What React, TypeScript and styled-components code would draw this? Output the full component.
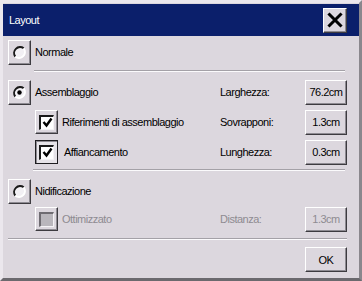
import styled, { createGlobalStyle } from 'styled-components';

const GlobalStyle = createGlobalStyle`
  html, body {
    margin: 0;
    padding: 0;
    background: #dcd7de;
  }
  * {
    box-sizing: border-box;
  }
`;

const FONT = `"Liberation Sans Narrow", "Arial Narrow", "Liberation Sans", Arial, sans-serif`;

export default function App() {
  return (
    <>
      <GlobalStyle />
      <Window>
        <TitleBar>
          <Title>Layout</Title>
          <CloseButton aria-label="Chiudi">
            <svg width="16" height="16" viewBox="0 0 16 16">
              <path d="M2.5 2.5 L13.5 13.5 M13.5 2.5 L2.5 13.5" stroke="#000" strokeWidth="3" strokeLinecap="square" />
            </svg>
          </CloseButton>
        </TitleBar>

        <Body>
          <OptionLine>
            <Radio />
            <OptionLabel>Normale</OptionLabel>
          </OptionLine>

          <Divider $left={26} $top={5} />

          <Section $top={7}>
            <OptionLine>
              <Radio checked />
              <OptionLabel>Assemblaggio</OptionLabel>
            </OptionLine>
            <FieldLabel>Larghezza:</FieldLabel>
            <ValueButton>76.2cm</ValueButton>

            <SubOption>
              <Checkbox checked />
              <OptionLabel>Riferimenti di assemblaggio</OptionLabel>
            </SubOption>
            <FieldLabel>Sovrapponi:</FieldLabel>
            <ValueButton>1.3cm</ValueButton>

            <SubOption>
              <Checkbox checked pressed />
              <OptionLabel $shift={2}>Affiancamento</OptionLabel>
            </SubOption>
            <FieldLabel>Lunghezza:</FieldLabel>
            <ValueButton>0.3cm</ValueButton>
          </Section>

          <Divider $left={25} $top={4} />

          <Section $top={7} $gap={2}>
            <OptionLine>
              <Radio />
              <OptionLabel>Nidificazione</OptionLabel>
            </OptionLine>
            <span />
            <span />

            <SubOption>
              <Checkbox disabled />
              <OptionLabel $disabled>Ottimizzato</OptionLabel>
            </SubOption>
            <FieldLabel $disabled>Distanza:</FieldLabel>
            <ValueButton $disabled>1.3cm</ValueButton>
          </Section>

          <Divider $left={0} $top={6} $right={0} />

          <Footer>
            <ValueButton>OK</ValueButton>
          </Footer>
        </Body>
      </Window>
    </>
  );
}

function Radio({ checked = false }: { checked?: boolean }) {
  return (
    <RadioFrame>
      <svg width="15" height="15" viewBox="0 0 15 15">
        <circle cx="7.5" cy="7.5" r="6" fill="#f2f0f4" />
        <path d="M11.7 3.3 A6 6 0 0 0 3.3 11.7" fill="none" stroke="#1a1a1a" strokeWidth="2" />
        <path d="M3.3 11.7 A6 6 0 0 0 11.7 3.3" fill="none" stroke="#ffffff" strokeWidth="2" />
        {checked && <circle cx="7.5" cy="7.5" r="2.2" fill="#000" />}
      </svg>
    </RadioFrame>
  );
}

function Checkbox({
  checked = false,
  pressed = false,
  disabled = false,
}: {
  checked?: boolean;
  pressed?: boolean;
  disabled?: boolean;
}) {
  return (
    <CheckFrame $pressed={pressed}>
      <CheckBox $disabled={disabled}>
        {checked && (
          <svg width="11" height="11" viewBox="0 0 11 11">
            <path d="M1.5 5 L4.5 8.5 L9.5 1.5" fill="none" stroke="#000" strokeWidth="2.4" />
          </svg>
        )}
      </CheckBox>
    </CheckFrame>
  );
}

// styled-components

const Window = styled.div`
  width: 362px;
  height: 281px;
  padding-top: 1px;
  background: #dcd7de;
  border-top: 3px solid #ebe7ed;
  border-left: 3px solid #ebe7ed;
  border-right: 3px solid #8a878d;
  border-bottom: 3px solid #6b696e;
  font-family: ${FONT};
  font-size: 11px;
  letter-spacing: -0.5px;
  color: #000;
  overflow: hidden;
`;

const TitleBar = styled.div`
  height: 32px;
  display: flex;
  align-items: center;
  justify-content: space-between;
  padding: 0 12px 0 6px;
  background: #0b1f6b;
`;

const Title = styled.span`
  color: #fff;
  font-size: 11px;
`;

const CloseButton = styled.div`
  width: 24px;
  height: 25px;
  display: flex;
  align-items: center;
  justify-content: center;
  background: #dcd7de;
  border-top: 1px solid #fff;
  border-left: 1px solid #fff;
  border-right: 1px solid #3d3b40;
  border-bottom: 1px solid #3d3b40;
  box-shadow: inset -1px -1px #8e8b92;
`;

const Body = styled.div`
  display: flex;
  flex-direction: column;
  padding: 3px 12px 0 5px;
`;

const OptionLine = styled.div`
  display: flex;
  align-items: center;
  gap: 4px;
  height: 26px;
`;

const SubOption = styled(OptionLine)`
  padding-left: 27px;
`;

const OptionLabel = styled.span<{ $disabled?: boolean; $shift?: number }>`
  color: ${(p) => (p.$disabled ? '#8e8b91' : '#000')};
  margin-left: ${(p) => p.$shift ?? 0}px;
  white-space: nowrap;
`;

const FieldLabel = styled.span<{ $disabled?: boolean }>`
  color: ${(p) => (p.$disabled ? '#8e8b91' : '#000')};
  white-space: nowrap;
`;

const Section = styled.div<{ $top: number; $gap?: number }>`
  display: grid;
  grid-template-columns: 1fr 85px 42px;
  grid-auto-rows: 26px;
  row-gap: ${(p) => p.$gap ?? 4}px;
  align-items: center;
  margin-top: ${(p) => p.$top}px;
`;

const Divider = styled.div<{ $left: number; $top: number; $right?: number }>`
  height: 2px;
  margin: ${(p) => p.$top}px ${(p) => p.$right ?? 2}px 0 ${(p) => p.$left}px;
  border-top: 1px solid #a4a1a7;
  border-bottom: 1px solid #fbfafc;
`;

const RadioFrame = styled.div`
  width: 23px;
  height: 25px;
  display: flex;
  align-items: center;
  justify-content: center;
  flex-shrink: 0;
  background: #dcd7de;
  border-top: 1px solid #fff;
  border-left: 1px solid #fff;
  border-right: 1px solid #3d3b40;
  border-bottom: 1px solid #3d3b40;
  box-shadow: inset -1px -1px #8e8b92;
`;

const CheckFrame = styled.div<{ $pressed: boolean }>`
  width: 23px;
  height: 24px;
  display: flex;
  align-items: center;
  justify-content: center;
  flex-shrink: 0;
  background: ${(p) => (p.$pressed ? '#e6e3e8' : '#dcd7de')};
  border: 1px solid ${(p) => (p.$pressed ? '#1e1d20' : '#fff')};
  border-right-color: ${(p) => (p.$pressed ? '#1e1d20' : '#3d3b40')};
  border-bottom-color: ${(p) => (p.$pressed ? '#1e1d20' : '#3d3b40')};
  box-shadow: ${(p) => (p.$pressed ? 'inset 1px 1px #8e8b92' : 'inset -1px -1px #8e8b92')};
`;

const CheckBox = styled.div<{ $disabled: boolean }>`
  width: 15px;
  height: 15px;
  display: flex;
  align-items: center;
  justify-content: center;
  background: ${(p) => (p.$disabled ? '#b9b6bc' : '#fff')};
  border-top: 2px solid ${(p) => (p.$disabled ? '#6e6b71' : '#1a1a1a')};
  border-left: 2px solid ${(p) => (p.$disabled ? '#6e6b71' : '#1a1a1a')};
  border-right: 1px solid #f4f2f5;
  border-bottom: 1px solid #f4f2f5;
`;

const ValueButton = styled.div<{ $disabled?: boolean }>`
  width: 42px;
  height: 25px;
  display: flex;
  align-items: center;
  justify-content: center;
  color: ${(p) => (p.$disabled ? '#8e8b91' : '#000')};
  background: #dcd7de;
  border-top: 1px solid #fff;
  border-left: 1px solid #fff;
  border-right: 1px solid #3d3b40;
  border-bottom: 1px solid #3d3b40;
  box-shadow: inset -1px -1px #8e8b92;
`;

const Footer = styled.div`
  display: flex;
  justify-content: flex-end;
  margin-top: 7px;
`;
